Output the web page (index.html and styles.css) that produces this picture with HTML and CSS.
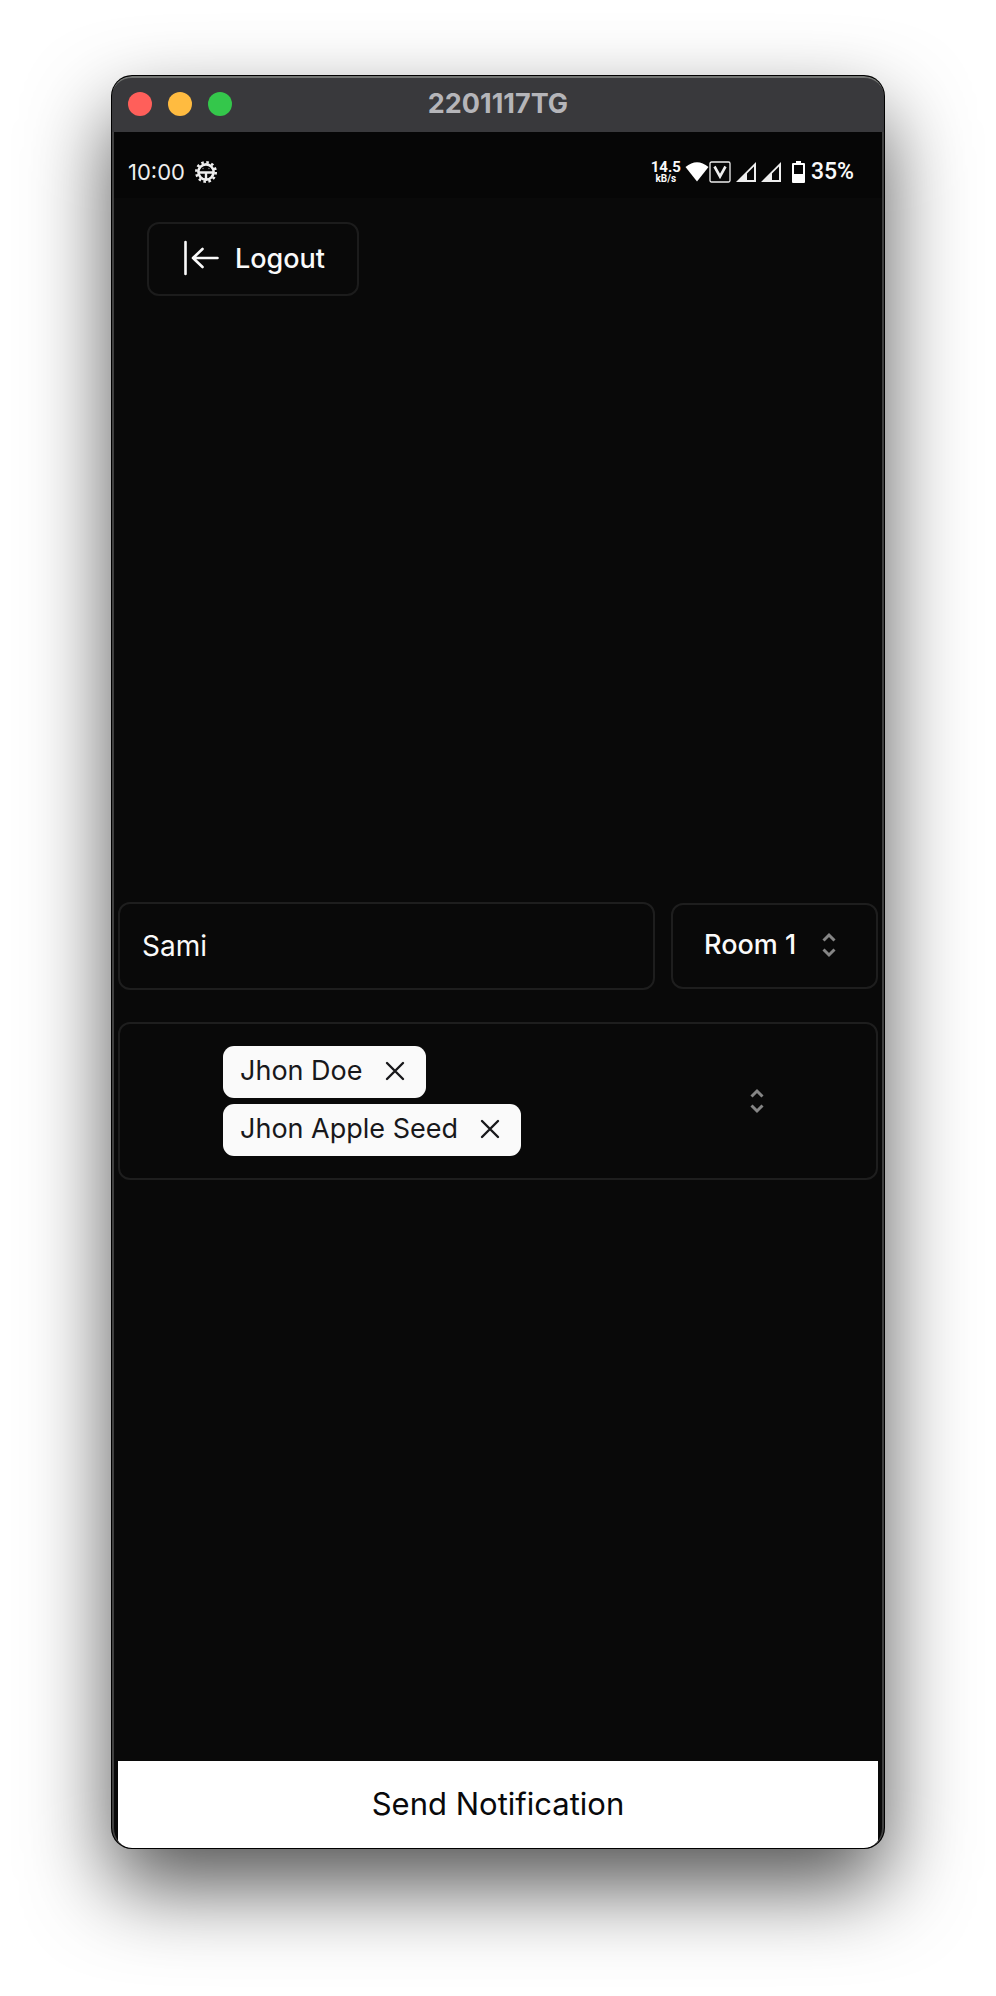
FILE: index.html
```html
<!DOCTYPE html>
<html lang="en">
<head>
<meta charset="utf-8">
<meta name="viewport" content="width=device-width, initial-scale=1">
<title>2201117TG</title>
<link rel="stylesheet" href="styles.css">
</head>
<body>
<div class="window">
  <header class="titlebar">
    <div class="lights">
      <button class="light light-close" type="button" aria-label="Close"></button>
      <button class="light light-min" type="button" aria-label="Minimize"></button>
      <button class="light light-max" type="button" aria-label="Zoom"></button>
    </div>
    <h1 class="title">2201117TG</h1>
  </header>
  <div class="screen">
    <div class="status">
      <div class="status-side">
        <span class="clock">10:00</span>
        <svg width="22" height="22" viewBox="0 0 22 22" fill="none" stroke="#eee" aria-hidden="true">
          <circle cx="11" cy="11" r="9.7" stroke-width="2.6" stroke-dasharray="2.54 2.54"/>
          <circle cx="11" cy="11" r="7.6" stroke-width="2.6"/>
          <path d="M3 11.500h16M11 11.500v8" stroke-width="2.400"/>
          <path d="M8 7.500h.1M13.900 7.500h.1" stroke-width="1.500" stroke-linecap="round" opacity=".5"/>
        </svg>
      </div>
      <div class="status-side status-right">
        <div class="speed"><span class="speed-value">14.5</span><span class="speed-unit">kB/s</span></div>
        <svg width="24" height="22" viewBox="0 0 24 22" aria-hidden="true"><path d="M.5 6Q12-3.400 23.500 6L12 20.500z" fill="#fff"/></svg>
        <svg class="volte" width="22" height="22" viewBox="0 0 22 22" fill="none" stroke="#eee" aria-hidden="true">
          <rect x="1" y="1" width="20" height="20" rx="1.500" stroke-width="1.300"/>
          <path d="M5.500 5.500L11 15.500l5.500-10" stroke-width="2.600"/>
        </svg>
        <svg class="signal" width="20" height="20" viewBox="0 0 20 20" aria-hidden="true"><path d="M0 20L20 0v20zM11 11.500V18h7V4.500z" fill="#eee" fill-rule="evenodd"/></svg>
        <svg class="signal" width="20" height="20" viewBox="0 0 20 20" aria-hidden="true"><path d="M0 20L20 0v20zM11 11.500V18h7V4.500z" fill="#eee" fill-rule="evenodd"/></svg>
        <svg class="battery" width="13" height="22" viewBox="0 0 13 22" aria-hidden="true"><path d="M4 0h5v2h3a1 1 0 0 1 1 1v18a1 1 0 0 1-1 1H1a1 1 0 0 1-1-1V3a1 1 0 0 1 1-1h3zM2 4v9h9V4z" fill="#fff" fill-rule="evenodd"/></svg>
        <span class="percent">35%</span>
      </div>
    </div>
    <nav class="toolbar">
      <button class="logout" type="button">
        <svg width="36" height="36" viewBox="0 0 36 36" fill="none" stroke="#fafafa" stroke-width="2.600" stroke-linecap="round" stroke-linejoin="round" aria-hidden="true">
          <path d="M2.500 2v32M34.500 18H10M19.500 9L10 18l9.500 9"/>
        </svg>
        Logout
      </button>
    </nav>
    <main class="form">
      <div class="row">
        <input class="name" type="text" value="Sami" aria-label="Name">
        <div class="room">
          <select class="room-select" aria-label="Room"><option>Room 1</option></select>
          <svg class="room-arrows" width="14" height="26" viewBox="0 0 14 26" fill="none" stroke="#858585" stroke-width="3" aria-hidden="true"><path d="M1.500 8.500L7 3l5.500 5.500M1.500 17.500L7 23l5.500-5.500"/></svg>
        </div>
      </div>
      <div class="people">
        <ul class="chips">
          <li class="chip">Jhon Doe
            <button class="icon-button" type="button" aria-label="Remove Jhon Doe"><svg width="20" height="20" viewBox="0 0 20 20" stroke="#18181b" stroke-width="2.400" stroke-linecap="round" aria-hidden="true"><path d="M2 2l16 16M18 2L2 18"/></svg></button>
          </li>
          <li class="chip">Jhon Apple Seed
            <button class="icon-button" type="button" aria-label="Remove Jhon Apple Seed"><svg width="20" height="20" viewBox="0 0 20 20" stroke="#18181b" stroke-width="2.400" stroke-linecap="round" aria-hidden="true"><path d="M2 2l16 16M18 2L2 18"/></svg></button>
          </li>
        </ul>
        <button class="icon-button" type="button" aria-label="Choose people"><svg width="14" height="26" viewBox="0 0 14 26" fill="none" stroke="#858585" stroke-width="3" aria-hidden="true"><path d="M1.500 8.500L7 3l5.500 5.500M1.500 17.500L7 23l5.500-5.500"/></svg></button>
      </div>
    </main>
    <footer class="footer"><button class="send" type="button">Send Notification</button></footer>
  </div>
</div>
</body>
</html>
```
FILE: styles.css
```css
* { box-sizing: border-box; }

body {
  margin: 0;
  min-height: 100vh;
  padding: 76px 112px 148px;
  display: flex;
  background: #fff;
  color: #fafafa;
  font-family: Inter, "Liberation Sans", sans-serif;
  font-size: 28px;
}

button, input, select { font: inherit; color: inherit; }
button { cursor: pointer; }
svg { display: block; flex: none; }

.window {
  flex: 1;
  min-width: 0;
  display: flex;
  flex-direction: column;
  overflow: hidden;
  border-radius: 20px;
  background: #090909;
  box-shadow: 0 0 0 1px #000, 0 38px 84px rgba(0, 0, 0, 0.68);
}

.titlebar {
  display: grid;
  grid-template-columns: 1fr auto 1fr;
  align-items: center;
  height: 56px;
  padding: 0 16px 3px;
  border-top: 2px solid #737573;
  border-radius: 20px 20px 0 0;
  background: #39393c;
}
.lights { display: flex; gap: 16px; }
.light { width: 24px; height: 24px; padding: 0; border: 0; border-radius: 50%; }
.light-close { background: #ff5f5a; }
.light-min { background: #ffbb40; }
.light-max { background: #34c74b; }
.title { margin: 0; font-size: 27px; line-height: 32px; font-weight: 700; color: #b5b5b9; }

.screen {
  flex: 1;
  display: flex;
  flex-direction: column;
  border: solid #404040;
  border-width: 0 2px;
  border-radius: 0 0 20px 20px;
  overflow: hidden;
}

.status {
  display: flex;
  justify-content: space-between;
  align-items: center;
  height: 66px;
  padding: 14px 28px 0 14px;
  background: #060606;
}
.status-side { display: flex; align-items: center; gap: 10px; }
.status-right { gap: 0; }
.clock { font-size: 22px; line-height: 28px; color: #eee; }
.percent { margin-left: 6px; font-family: Roboto, sans-serif; font-size: 23px; line-height: 28px; font-weight: 500; }
.speed {
  display: flex;
  flex-direction: column;
  align-items: center;
  margin-right: 4px;
  font-family: Roboto, sans-serif;
}
.speed-value { font-size: 15px; line-height: 14px; font-weight: 700; }
.speed-unit { font-size: 10px; line-height: 10px; font-weight: 700; }
.volte { margin-right: 5px; }
.signal { margin-right: 5px; }
.battery { margin-left: 6px; }

.toolbar { padding: 24px 33px; }
.logout {
  display: flex;
  align-items: center;
  gap: 16px;
  height: 74px;
  padding: 0 32px 2px 34px;
  border: 2px solid #1c1c1c;
  border-radius: 12px;
  background: transparent;
  font-size: 27px;
  font-weight: 500;
}

.form {
  flex: 1;
  display: flex;
  flex-direction: column;
  justify-content: center;
  gap: 32px;
  padding: 0 4px;
}
.row { display: flex; align-items: center; gap: 16px; }
.name {
  flex: 1;
  min-width: 0;
  height: 88px;
  padding: 0 22px;
  border: 2px solid #1e1e1e;
  border-radius: 12px;
  background: transparent;
}
.room { position: relative; flex: none; width: 207px; }
.room-select {
  display: block;
  appearance: none;
  width: 100%;
  height: 86px;
  padding: 0 32px 2px 31px;
  border: 2px solid #1e1e1e;
  border-radius: 12px;
  background: #090909;
  font-size: 27px;
  font-weight: 500;
}
.room-arrows { position: absolute; right: 42px; top: 29px; pointer-events: none; }

.people {
  display: flex;
  align-items: center;
  justify-content: space-between;
  padding: 22px 112px 22px 103px;
  border: 2px solid #1e1e1e;
  border-radius: 12px;
}
.chips {
  display: flex;
  flex-direction: column;
  align-items: flex-start;
  gap: 6px;
  margin: 0;
  padding: 0;
  list-style: none;
}
.chip {
  display: flex;
  align-items: center;
  gap: 22px;
  height: 52px;
  padding: 0 21px 2px 17px;
  border-radius: 11px;
  background: #fafafa;
  color: #18181b;
  font-size: 27px;
}
.icon-button { padding: 0; border: 0; background: transparent; }

.footer { padding: 0 4px; }
.send {
  display: block;
  width: 100%;
  height: 87px;
  padding: 0 0 3px;
  border: 0;
  background: #fff;
  color: #09090b;
  font-size: 31px;
}
```
